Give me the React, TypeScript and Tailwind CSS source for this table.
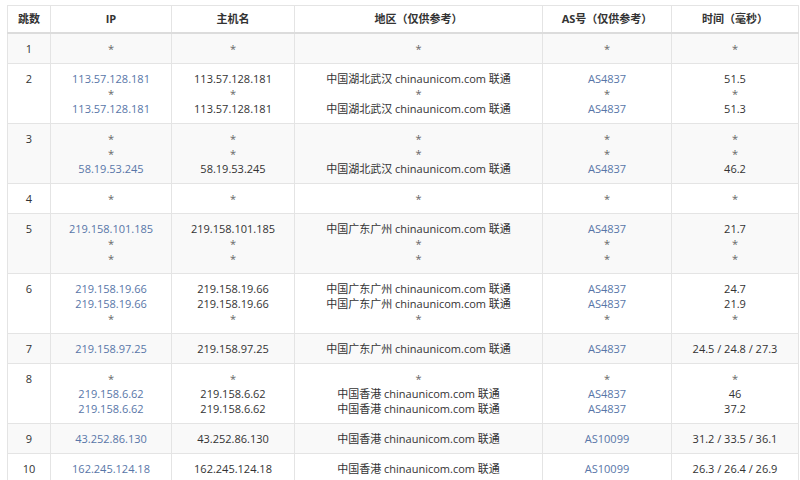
import React from "react";

type Row = { hop: string; ip: string[]; host: string[]; region: string[]; as: string[]; time: string[] };

const HB = "中国湖北武汉 chinaunicom.com 联通";
const GD = "中国广东广州 chinaunicom.com 联通";
const HK = "中国香港 chinaunicom.com 联通";

const rows: Row[] = [
  { hop: "1", ip: ["*"], host: ["*"], region: ["*"], as: ["*"], time: ["*"] },
  {
    hop: "2",
    ip: ["113.57.128.181", "*", "113.57.128.181"],
    host: ["113.57.128.181", "*", "113.57.128.181"],
    region: [HB, "*", HB],
    as: ["AS4837", "*", "AS4837"],
    time: ["51.5", "*", "51.3"],
  },
  {
    hop: "3",
    ip: ["*", "*", "58.19.53.245"],
    host: ["*", "*", "58.19.53.245"],
    region: ["*", "*", HB],
    as: ["*", "*", "AS4837"],
    time: ["*", "*", "46.2"],
  },
  { hop: "4", ip: ["*"], host: ["*"], region: ["*"], as: ["*"], time: ["*"] },
  {
    hop: "5",
    ip: ["219.158.101.185", "*", "*"],
    host: ["219.158.101.185", "*", "*"],
    region: [GD, "*", "*"],
    as: ["AS4837", "*", "*"],
    time: ["21.7", "*", "*"],
  },
  {
    hop: "6",
    ip: ["219.158.19.66", "219.158.19.66", "*"],
    host: ["219.158.19.66", "219.158.19.66", "*"],
    region: [GD, GD, "*"],
    as: ["AS4837", "AS4837", "*"],
    time: ["24.7", "21.9", "*"],
  },
  {
    hop: "7",
    ip: ["219.158.97.25"],
    host: ["219.158.97.25"],
    region: [GD],
    as: ["AS4837"],
    time: ["24.5 / 24.8 / 27.3"],
  },
  {
    hop: "8",
    ip: ["*", "219.158.6.62", "219.158.6.62"],
    host: ["*", "219.158.6.62", "219.158.6.62"],
    region: ["*", HK, HK],
    as: ["*", "AS4837", "AS4837"],
    time: ["*", "46", "37.2"],
  },
  {
    hop: "9",
    ip: ["43.252.86.130"],
    host: ["43.252.86.130"],
    region: [HK],
    as: ["AS10099"],
    time: ["31.2 / 33.5 / 36.1"],
  },
  {
    hop: "10",
    ip: ["162.245.124.18"],
    host: ["162.245.124.18"],
    region: [HK],
    as: ["AS10099"],
    time: ["26.3 / 26.4 / 26.9"],
  },
];

function Lines({ items, link }: { items: string[]; link?: boolean }) {
  return (
    <>
      {items.map((t, i) => (
        <div key={i} className={t === "*" ? "text-[#666]" : link ? "text-[#5876a8]" : "text-[#333]"}>
          {t}
        </div>
      ))}
    </>
  );
}

export default function App() {
  const td = "border border-[#e4e4e4] px-1 py-[7px] align-top text-center";
  const th = "border border-[#e4e4e4] border-b-2 border-b-[#dcdcdc] px-1 h-[27px] text-center font-bold text-[#333]";
  return (
    <div
      className="w-[800px] h-[480px] overflow-hidden bg-white pl-[7px] pt-[5px]"
      style={{ fontFamily: '"Open Sans", "Noto Sans CJK SC", sans-serif' }}
    >
      <table className="border-collapse table-fixed w-[791px] text-[11px] leading-[15px]">
        <colgroup>
          <col className="w-[43px]" />
          <col className="w-[121px]" />
          <col className="w-[123px]" />
          <col className="w-[248px]" />
          <col className="w-[129px]" />
          <col className="w-[127px]" />
        </colgroup>
        <thead>
          <tr className="bg-white">
            <th className={th}>跳数</th>
            <th className={th}>IP</th>
            <th className={th}>主机名</th>
            <th className={th}>地区（仅供参考）</th>
            <th className={th}>AS号（仅供参考）</th>
            <th className={th}>时间（毫秒）</th>
          </tr>
        </thead>
        <tbody>
          {rows.map((r, i) => (
            <tr key={r.hop} className={i % 2 === 0 ? "bg-[#f9f9f9]" : "bg-white"}>
              <td className={td + " text-[#333]"}>{r.hop}</td>
              <td className={td}>
                <Lines items={r.ip} link />
              </td>
              <td className={td}>
                <Lines items={r.host} />
              </td>
              <td className={td}>
                <Lines items={r.region} />
              </td>
              <td className={td}>
                <Lines items={r.as} link />
              </td>
              <td className={td}>
                <Lines items={r.time} />
              </td>
            </tr>
          ))}
        </tbody>
      </table>
    </div>
  );
}
